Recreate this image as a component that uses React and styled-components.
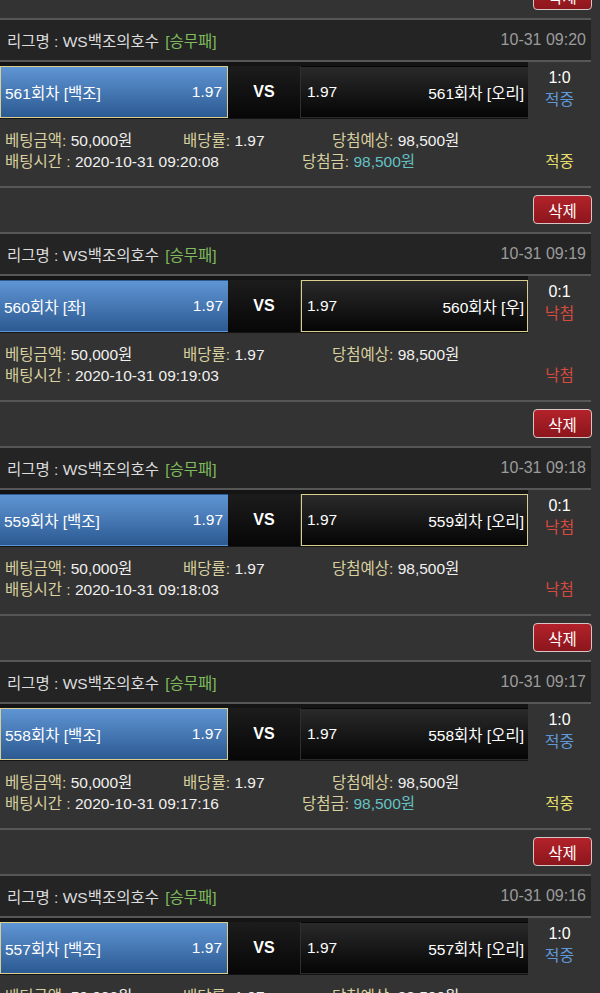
import React from 'react';
import styled, { createGlobalStyle } from 'styled-components';

const bets = [
  { round: 561, left: '백조', right: '오리', pick: 'left', score: '1:0', win: true, at: '10-31 09:20', time: '2020-10-31 09:20:08' },
  { round: 560, left: '좌', right: '우', pick: 'right', score: '0:1', win: false, at: '10-31 09:19', time: '2020-10-31 09:19:03' },
  { round: 559, left: '백조', right: '오리', pick: 'right', score: '0:1', win: false, at: '10-31 09:18', time: '2020-10-31 09:18:03' },
  { round: 558, left: '백조', right: '오리', pick: 'left', score: '1:0', win: true, at: '10-31 09:17', time: '2020-10-31 09:17:16' },
  { round: 557, left: '백조', right: '오리', pick: 'left', score: '1:0', win: true, at: '10-31 09:16', time: '2020-10-31 09:16:05' },
];

export default function App() {
  return (
    <>
      <GlobalStyle />
      <Page>
        <ButtonRow>
          <DeleteButton>삭제</DeleteButton>
        </ButtonRow>
        {bets.map(bet => (
          <Card key={bet.round}>
            <Header>
              <span>
                리그명 : WS백조의호수 <GameType>[승무패]</GameType>
              </span>
              <Stamp>{bet.at}</Stamp>
            </Header>

            <MatchRow>
              <HomeBox $picked={bet.pick === 'left'}>
                <span>{bet.round}회차 [{bet.left}]</span>
                <span>1.97</span>
              </HomeBox>
              <Versus>VS</Versus>
              <AwayBox $picked={bet.pick === 'right'}>
                <span>1.97</span>
                <span>{bet.round}회차 [{bet.right}]</span>
              </AwayBox>
              <Score>
                <div>{bet.score}</div>
                <Outcome $win={bet.win}>{bet.win ? '적중' : '낙첨'}</Outcome>
              </Score>
            </MatchRow>

            <Info>
              <InfoLine>
                <Cell $w="178px"><Label>베팅금액:</Label> 50,000원</Cell>
                <Cell $w="149px"><Label>배당률:</Label> 1.97</Cell>
                <Cell><Label>당첨예상:</Label> 98,500원</Cell>
              </InfoLine>
              <InfoLine>
                <Cell $w="297px"><Label>배팅시간 :</Label> {bet.time}</Cell>
                <Cell>
                  {bet.win && (<><Label>당첨금:</Label> <Prize>98,500원</Prize></>)}
                </Cell>
                <Status $win={bet.win}>{bet.win ? '적중' : '낙첨'}</Status>
              </InfoLine>
            </Info>

            <ButtonRow>
              <DeleteButton>삭제</DeleteButton>
            </ButtonRow>
          </Card>
        ))}
      </Page>
    </>
  );
}

const GlobalStyle = createGlobalStyle`
  html, body {
    margin: 0;
    padding: 0;
    background: #333333;
    overflow: hidden;
  }
  body {
    font-family: "Liberation Sans", "Noto Sans CJK KR", sans-serif;
    font-size: 15px;
    color: #eeeeee;
  }
`;

const Page = styled.div`
  width: 591px;
  margin-top: -26px;
`;

const Card = styled.div`
  border-top: 2px solid #575757;
`;

const Header = styled.div`
  height: 40px;
  display: flex;
  align-items: center;
  justify-content: space-between;
  padding: 0 5px 0 7px;
  background: #242424;
  border-bottom: 2px solid #575757;
  color: #dddddd;
  font-size: 15.5px;
`;

const GameType = styled.span`
  color: #7fbb5c;
  margin-left: 2px;
`;

const Stamp = styled.span`
  color: #9c9c9c;
  font-size: 16px;
`;

const MatchRow = styled.div`
  height: 57px;
  display: grid;
  grid-template-columns: 228px 73px 227px 63px;
  background: linear-gradient(to right, #141414 0, #141414 528px, #333333 528px);
`;

const Side = styled.div`
  margin-top: 4px;
  height: 52px;
  box-sizing: border-box;
  display: flex;
  align-items: center;
  justify-content: space-between;
  border: 1px solid ${p => (p.$picked ? '#d9ce8f' : 'transparent')};
  color: #ffffff;
  font-size: 15.5px;
`;

const HomeBox = styled(Side)`
  padding: 0 5px 0 4px;
  background: linear-gradient(to bottom, #5f95d4, #2c5a92);
  ${p => !p.$picked && 'border-width: 1px 0 1px 0;'}
`;

const AwayBox = styled(Side)`
  padding: 0 3px 0 5px;
  background: linear-gradient(to bottom, #2a2a2a, #050505);
`;

const Versus = styled.div`
  margin-top: 4px;
  height: 52px;
  display: flex;
  align-items: center;
  justify-content: center;
  background: linear-gradient(to bottom, #1c1c1c, #070707);
  border-right: 1px solid #2f2f2f;
  font-weight: bold;
  font-size: 16px;
  color: #ffffff;
`;

const Score = styled.div`
  display: flex;
  flex-direction: column;
  align-items: center;
  justify-content: center;
  gap: 2px;
  padding-bottom: 4px;
  background: #333333;
  font-size: 16px;
  line-height: 20px;
  color: #ffffff;
`;

const Outcome = styled.div`
  color: ${p => (p.$win ? '#5f98d8' : '#d64a40')};
`;

const Info = styled.div`
  height: 69px;
  box-sizing: border-box;
  padding: 9px 0 0 5px;
  border-bottom: 2px solid #575757;
`;

const InfoLine = styled.div`
  display: flex;
  align-items: center;
  height: 21px;
  font-size: 15.5px;
  color: #f0f0f0;
`;

const Cell = styled.div`
  width: ${p => p.$w || 'auto'};
  flex: ${p => (p.$w ? 'none' : '1')};
  white-space: nowrap;
`;

const Label = styled.span`
  color: #d9d09f;
`;

const Prize = styled.span`
  color: #63c2c4;
`;

const Status = styled.div`
  width: 63px;
  text-align: center;
  color: ${p => (p.$win ? '#e6de6a' : '#d64a40')};
`;

const ButtonRow = styled.div`
  height: 44px;
  box-sizing: border-box;
  display: flex;
  justify-content: flex-end;
  align-items: flex-start;
  padding-top: 7px;
  margin-right: -1px;
`;

const DeleteButton = styled.button`
  width: 59px;
  height: 29px;
  padding: 0;
  border: 1px solid #d8c6c6;
  border-radius: 4px;
  background: linear-gradient(to bottom, #b3222a, #8c161c);
  color: #ffffff;
  font-family: "Liberation Sans", "Noto Sans CJK KR", sans-serif;
  font-size: 15.5px;
`;
